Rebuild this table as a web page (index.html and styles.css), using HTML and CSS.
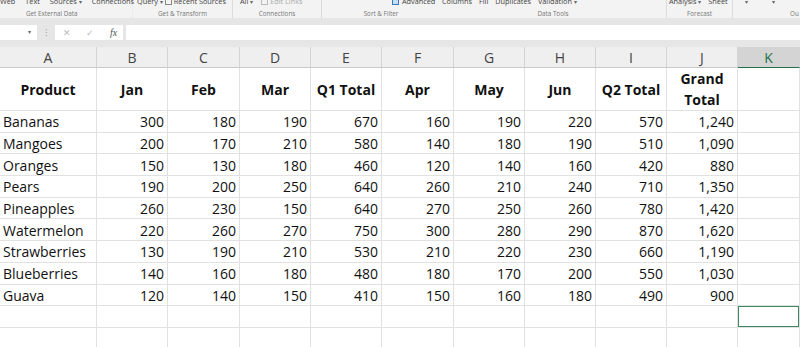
FILE: index.html
```html
<!DOCTYPE html>
<html lang="en">
<head>
    <meta charset="UTF-8">
    <meta name="viewport" content="width=device-width, initial-scale=1.0">
    <title>Sales</title>
    <link rel="stylesheet" href="styles.css">
</head>
<body>
    <div class="ribbon">
        <div class="group g-ext">
            <div class="cmds"><span>Web</span><span>Text</span><span>Sources <i class="dd">▾</i></span><span>Connections</span></div>
            <div class="glabel">Get External Data</div>
        </div>
        <div class="group g-trans">
            <div class="cmds"><span>Query <i class="dd">▾</i></span><span><b class="ico"></b>Recent Sources</span></div>
            <div class="glabel">Get &amp; Transform</div>
        </div>
        <div class="group g-conn">
            <div class="cmds"><span>All <i class="dd">▾</i></span><span class="off"><b class="ico"></b>Edit Links</span></div>
            <div class="glabel">Connections</div>
        </div>
        <div class="group g-sort">
            <div class="cmds"><span><b class="ico blue"></b>Advanced</span></div>
            <div class="glabel">Sort &amp; Filter</div>
        </div>
        <div class="group g-tools">
            <div class="cmds"><span>Columns</span><span>Fill</span><span>Duplicates</span><span>Validation <i class="dd">▾</i></span></div>
            <div class="glabel">Data Tools</div>
        </div>
        <div class="group g-fc">
            <div class="cmds"><span>Analysis <i class="dd">▾</i></span><span>Sheet</span></div>
            <div class="glabel">Forecast</div>
        </div>
        <div class="group g-out">
            <div class="cmds"><span><i class="dd">▾</i></span><span><i class="dd">▾</i></span></div>
            <div class="glabel">Ou</div>
        </div>
    </div>

    <div class="fbar">
        <div class="namebox"><span>▾</span></div>
        <div class="fsep">⁝</div>
        <div class="fbtns"><span class="x">✕</span><span class="ok">✓</span><span class="fx">fx</span></div>
        <div class="finput"></div>
    </div>

    <table class="sheet">
        <colgroup>
            <col class="c-a"><col class="c-n"><col class="c-w"><col class="c-n"><col class="c-n">
            <col class="c-w"><col class="c-n"><col class="c-n"><col class="c-n"><col class="c-n"><col>
        </colgroup>
        <tr class="colhead">
            <th>A</th><th>B</th><th>C</th><th>D</th><th>E</th><th>F</th><th>G</th><th>H</th><th>I</th><th>J</th><th class="active">K</th>
        </tr>
        <tr class="titles">
            <td>Product</td><td>Jan</td><td>Feb</td><td>Mar</td><td>Q1 Total</td><td>Apr</td><td>May</td><td>Jun</td><td>Q2 Total</td><td>Grand Total</td><td></td>
        </tr>
        <tr><td>Bananas</td><td>300</td><td>180</td><td>190</td><td>670</td><td>160</td><td>190</td><td>220</td><td>570</td><td>1,240</td><td></td></tr>
        <tr><td>Mangoes</td><td>200</td><td>170</td><td>210</td><td>580</td><td>140</td><td>180</td><td>190</td><td>510</td><td>1,090</td><td></td></tr>
        <tr><td>Oranges</td><td>150</td><td>130</td><td>180</td><td>460</td><td>120</td><td>140</td><td>160</td><td>420</td><td>880</td><td></td></tr>
        <tr><td>Pears</td><td>190</td><td>200</td><td>250</td><td>640</td><td>260</td><td>210</td><td>240</td><td>710</td><td>1,350</td><td></td></tr>
        <tr><td>Pineapples</td><td>260</td><td>230</td><td>150</td><td>640</td><td>270</td><td>250</td><td>260</td><td>780</td><td>1,420</td><td></td></tr>
        <tr><td>Watermelon</td><td>220</td><td>260</td><td>270</td><td>750</td><td>300</td><td>280</td><td>290</td><td>870</td><td>1,620</td><td></td></tr>
        <tr><td>Strawberries</td><td>130</td><td>190</td><td>210</td><td>530</td><td>210</td><td>220</td><td>230</td><td>660</td><td>1,190</td><td></td></tr>
        <tr><td>Blueberries</td><td>140</td><td>160</td><td>180</td><td>480</td><td>180</td><td>170</td><td>200</td><td>550</td><td>1,030</td><td></td></tr>
        <tr><td>Guava</td><td>120</td><td>140</td><td>150</td><td>410</td><td>150</td><td>160</td><td>180</td><td>490</td><td>900</td><td></td></tr>
        <tr class="blank"><td></td><td></td><td></td><td></td><td></td><td></td><td></td><td></td><td></td><td></td><td class="sel"></td></tr>
        <tr class="blank"><td></td><td></td><td></td><td></td><td></td><td></td><td></td><td></td><td></td><td></td><td></td></tr>
    </table>
</body>
</html>
```

FILE: styles.css
```css
body {
    margin: 0;
    width: 800px;
    height: 347px;
    overflow: hidden;
    background: #fff;
    font-family: "Open Sans", Arial, sans-serif;
}

/* ribbon strip, cut off at the top */
.ribbon {
    display: flex;
    height: 18px;
    background: #f3f3f3;
    overflow: hidden;
    color: #444;
}
.group {
    flex-shrink: 0;
    box-sizing: border-box;
    border-right: 1px solid #dcdcdc;
}
.cmds {
    display: flex;
    height: 9px;
    margin-top: -3px;
    font-size: 7.3px;
    line-height: 9px;
    white-space: nowrap;
}
.cmds .dd {
    font-style: normal;
    font-size: 6px;
    color: #666;
}
.ico {
    display: inline-block;
    width: 5px;
    height: 5px;
    margin-right: 2px;
    border: 1px solid #888;
    vertical-align: -1px;
}
.ico.blue {
    border-color: #3a78c4;
    background: #c6dcf3;
    margin-right: 3px;
}
.off {
    color: #aaa;
}
.off .ico {
    border-color: #bbb;
}
.glabel {
    margin-top: 4px;
    font-size: 6.3px;
    line-height: 8px;
    color: #777;
    text-align: center;
    white-space: nowrap;
}
.g-ext { width: 133px; border-right-color: #ececec; }
.g-ext .cmds { gap: 10px; }
.g-ext .glabel { text-align: left; padding-left: 26px; }
.g-trans { width: 100px; }
.g-trans .cmds { padding-left: 4px; gap: 2px; }
.g-conn { width: 89px; }
.g-conn .cmds { padding-left: 7px; gap: 8px; }
.g-sort { width: 118px; border-right: none; }
.g-sort .cmds { padding-left: 70px; }
.g-tools { width: 227px; }
.g-tools .cmds { padding-left: 2px; gap: 7px; }
.g-fc { width: 66px; }
.g-fc .cmds { padding-left: 2px; gap: 7px; }
.g-out { flex: 1; border-right: none; }
.g-out .cmds { padding-left: 12px; gap: 24px; }
.g-out .glabel { text-align: left; padding-left: 57px; }

/* formula bar */
.fbar {
    display: flex;
    height: 29px;
    padding: 7px 0;
    box-sizing: border-box;
    background: #e6e6e6;
}
.namebox {
    width: 37px;
    background: #fff;
    font-size: 6px;
    color: #666;
    text-align: right;
    line-height: 15px;
}
.namebox span {
    margin-right: 6px;
}
.fsep {
    width: 18px;
    text-align: center;
    font-size: 10px;
    line-height: 15px;
    color: #aaa;
}
.fbtns {
    display: flex;
    align-items: center;
    width: 68px;
    background: #fff;
    font-size: 9px;
    color: #bbb;
}
.fbtns .x { margin-left: 8px; }
.fbtns .ok { margin-left: 15px; }
.fbtns .fx {
    margin-left: 16px;
    font-family: "Liberation Serif", serif;
    font-style: italic;
    font-size: 10px;
    color: #555;
}
.finput {
    flex: 1;
    margin-left: 3px;
    background: #fff;
}

/* grid */
.sheet {
    width: 800px;
    table-layout: fixed;
    border-collapse: separate;
    border-spacing: 0;
    font-size: 14px;
    color: #111;
}
.c-a { width: 97px; }
.c-n { width: 71px; }
.c-w { width: 72px; }
.sheet td, .sheet th {
    box-sizing: border-box;
    padding: 1px 3px 0;
    border-right: 1px solid #e1e1e1;
    border-bottom: 1px solid #e1e1e1;
    line-height: 19px;
    white-space: nowrap;
    overflow: hidden;
}
.sheet td {
    height: 21.7px;
    text-align: right;
}
.sheet td:first-child {
    text-align: left;
}
.colhead th {
    height: 21px;
    padding-top: 0;
    background: #efefef;
    border-right-color: #d4d4d4;
    border-bottom-color: #c9c9c9;
    font-weight: normal;
    color: #444;
    text-align: center;
}
.colhead th.active {
    background: #d4d4d4;
    color: #217346;
    border-bottom-color: #217346;
}
.titles td {
    height: 43px;
    padding-top: 0;
    line-height: 21px;
    font-weight: bold;
    text-align: center;
    white-space: normal;
}
.titles td:first-child {
    text-align: center;
}
.blank td {
    height: 22px;
}
.sheet td.sel {
    box-shadow: inset 0 0 0 1px #3f8760;
}
```
